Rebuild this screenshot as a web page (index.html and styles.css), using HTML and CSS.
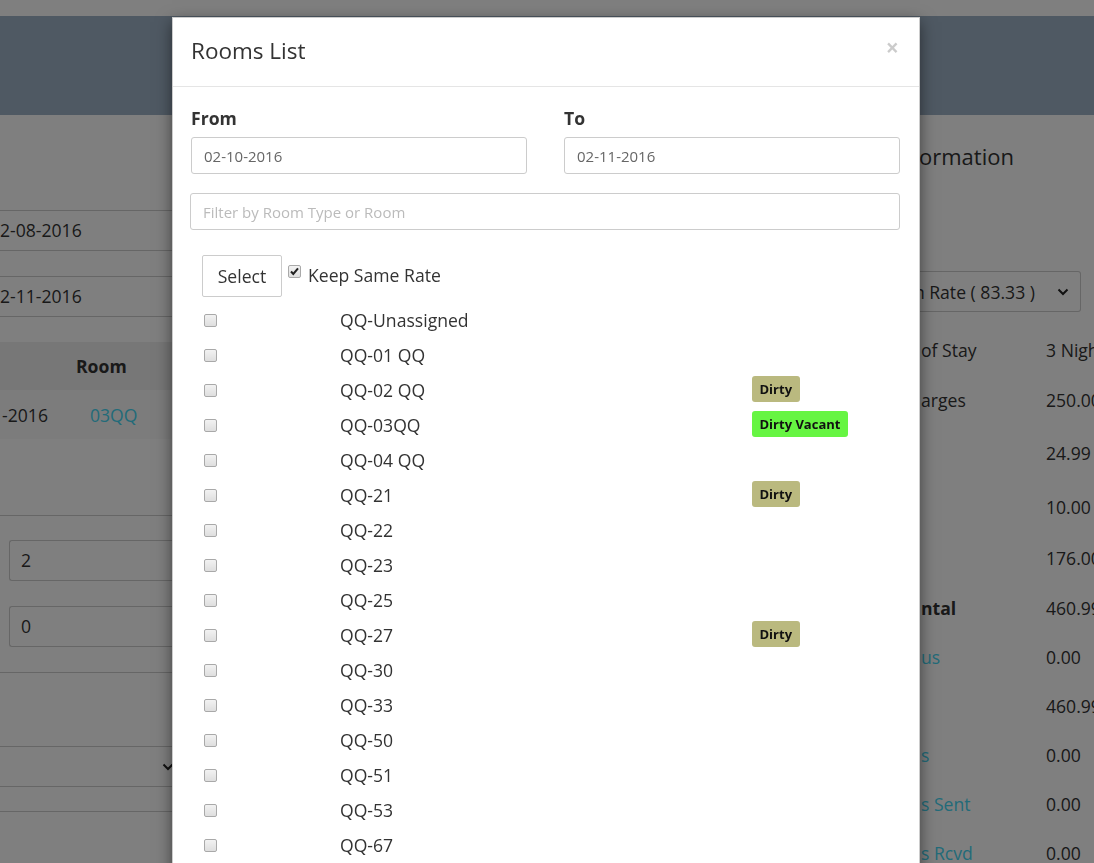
FILE: index.html
```html
<!DOCTYPE html>
<html lang="en">
<head>
<meta charset="utf-8">
<title>Rooms List</title>
<link rel="stylesheet" href="styles.css">
</head>
<body>
<div class="page">
  <div class="topstrip"></div>
  <div class="banner"></div>
  <div class="content">
    <div class="left-col">
      <div class="field field-first">2-08-2016</div>
      <div class="field field-next">2-11-2016</div>
      <div class="tbl-head"><span class="th-room">Room</span></div>
      <div class="tbl-row"><span class="td-date">1-2016</span><a class="link td-room">03QQ</a></div>
      <div class="divider divider-a"></div>
      <div class="num-input num-first">2</div>
      <div class="num-input num-next">0</div>
      <div class="divider divider-b"></div>
      <div class="select-left">
        <svg class="chev" width="12" height="8" viewBox="0 0 12 8"><polyline points="1.5,1.5 6,6 10.5,1.5" fill="none" stroke="#222" stroke-width="2"/></svg>
      </div>
      <div class="divider divider-c"></div>
    </div>
    <div class="mid-col"></div>
    <div class="right-col">
      <h3 class="info-title">ormation</h3>
      <div class="rate-select">
        <span class="rate-text">en Rate ( 83.33 )</span>
        <svg class="chev" width="12" height="8" viewBox="0 0 12 8"><polyline points="1.5,1.5 6,6 10.5,1.5" fill="none" stroke="#222" stroke-width="2"/></svg>
      </div>
      <div class="sum-row r1"><span class="sum-label">of Stay</span><span class="sum-val">3 Nights</span></div>
      <div class="sum-row r2"><span class="sum-label">arges</span><span class="sum-val">250.00</span></div>
      <div class="sum-row r3"><span class="sum-label"></span><span class="sum-val">24.99</span></div>
      <div class="sum-row r4"><span class="sum-label"></span><span class="sum-val">10.00</span></div>
      <div class="sum-row r5"><span class="sum-label"></span><span class="sum-val">176.00</span></div>
      <div class="sum-row"><span class="sum-label bold">ntal</span><span class="sum-val">460.99</span></div>
      <div class="sum-row"><a class="sum-label link">us</a><span class="sum-val">0.00</span></div>
      <div class="sum-row"><span class="sum-label"></span><span class="sum-val">460.99</span></div>
      <div class="sum-row"><a class="sum-label link">s</a><span class="sum-val">0.00</span></div>
      <div class="sum-row"><a class="sum-label link">s Sent</a><span class="sum-val">0.00</span></div>
      <div class="sum-row"><a class="sum-label link">s Rcvd</a><span class="sum-val">0.00</span></div>
    </div>
  </div>
</div>

<div class="backdrop"></div>

<div class="modal">
  <div class="modal-header">
    <h4 class="modal-title">Rooms List</h4>
    <button class="close" type="button">×</button>
  </div>
  <div class="modal-body">
    <div class="dates">
      <div class="date-group">
        <label class="lbl">From</label>
        <input class="form-input" type="text" value="02-10-2016" readonly>
      </div>
      <div class="date-group">
        <label class="lbl">To</label>
        <input class="form-input" type="text" value="02-11-2016" readonly>
      </div>
    </div>
    <input class="form-input filter" type="text" placeholder="Filter by Room Type or Room">
    <div class="select-row">
      <button class="btn" type="button">Select</button>
      <input class="cb cb-keep" type="checkbox" checked>
      <span class="keep-label">Keep Same Rate</span>
    </div>
    <div class="room-list">
      <div class="room"><input class="cb" type="checkbox"><span class="room-name">QQ-Unassigned</span><span></span></div>
      <div class="room"><input class="cb" type="checkbox"><span class="room-name">QQ-01 QQ</span><span></span></div>
      <div class="room"><input class="cb" type="checkbox"><span class="room-name">QQ-02 QQ</span><span class="badge badge-dirty">Dirty</span></div>
      <div class="room"><input class="cb" type="checkbox"><span class="room-name">QQ-03QQ</span><span class="badge badge-vacant">Dirty Vacant</span></div>
      <div class="room"><input class="cb" type="checkbox"><span class="room-name">QQ-04 QQ</span><span></span></div>
      <div class="room"><input class="cb" type="checkbox"><span class="room-name">QQ-21</span><span class="badge badge-dirty">Dirty</span></div>
      <div class="room"><input class="cb" type="checkbox"><span class="room-name">QQ-22</span><span></span></div>
      <div class="room"><input class="cb" type="checkbox"><span class="room-name">QQ-23</span><span></span></div>
      <div class="room"><input class="cb" type="checkbox"><span class="room-name">QQ-25</span><span></span></div>
      <div class="room"><input class="cb" type="checkbox"><span class="room-name">QQ-27</span><span class="badge badge-dirty">Dirty</span></div>
      <div class="room"><input class="cb" type="checkbox"><span class="room-name">QQ-30</span><span></span></div>
      <div class="room"><input class="cb" type="checkbox"><span class="room-name">QQ-33</span><span></span></div>
      <div class="room"><input class="cb" type="checkbox"><span class="room-name">QQ-50</span><span></span></div>
      <div class="room"><input class="cb" type="checkbox"><span class="room-name">QQ-51</span><span></span></div>
      <div class="room"><input class="cb" type="checkbox"><span class="room-name">QQ-53</span><span></span></div>
      <div class="room"><input class="cb" type="checkbox"><span class="room-name">QQ-67</span><span></span></div>
    </div>
  </div>
</div>
</body>
</html>
```

FILE: styles.css
```css
html, body {
  margin: 0;
  padding: 0;
  height: 100%;
  overflow: hidden;
}
body {
  font-family: "Open Sans", "Liberation Sans", sans-serif;
  font-size: 17.6px;
  color: #333;
  background: #fff;
}

/* ---------- underlying page ---------- */
.topstrip { height: 16px; background: #fff; }
.banner { height: 99px; background: #9fb3c6; }
.content {
  display: grid;
  grid-template-columns: 172px 748px 174px;
}
.left-col { overflow: hidden; padding-top: 95px; }
.field {
  height: 41px;
  box-sizing: border-box;
  border-top: 1px solid #ccc;
  border-bottom: 1px solid #ccc;
  line-height: 39px;
  white-space: nowrap;
}
.field-next { margin-top: 25px; }
.tbl-head {
  margin-top: 25px;
  height: 48px;
  background: #eee;
  display: flex;
  align-items: center;
}
.th-room { font-weight: 700; margin-left: 76px; }
.tbl-row {
  height: 49px;
  background: #f9f9f9;
  display: flex;
  align-items: center;
}
.td-date { text-indent: -8px; width: 90px; white-space: nowrap; }
.link { color: #45d6f2; text-decoration: none; }
.divider { border-top: 1px solid #ccc; }
.divider-a { margin-top: 76px; }
.num-input {
  margin-left: 9px;
  height: 41px;
  box-sizing: border-box;
  border: 1px solid #ccc;
  border-right: none;
  border-radius: 3px 0 0 3px;
  padding-left: 11px;
  line-height: 39px;
}
.num-first { margin-top: 24px; }
.num-next { margin-top: 25px; }
.divider-b { margin-top: 25px; }
.select-left {
  margin-top: 73px;
  height: 41px;
  box-sizing: border-box;
  border-top: 1px solid #ccc;
  border-bottom: 1px solid #ccc;
  display: flex;
  align-items: center;
  justify-content: flex-end;
  padding-right: 1px;
}
.select-left .chev { margin-right: -3px; }
.divider-c { margin-top: 24px; }

.right-col { padding-top: 29px; white-space: nowrap; overflow: hidden; }
.info-title {
  margin: 0;
  font-size: 22px;
  font-weight: 400;
  line-height: 24px;
  margin-left: -1px;
}
.rate-select {
  margin-top: 103px;
  width: 161px;
  height: 41px;
  box-sizing: border-box;
  border: 1px solid #ccc;
  border-left: none;
  border-radius: 0 3px 3px 0;
  display: flex;
  align-items: center;
}
.rate-text { margin-left: -16px; }
.rate-select .chev { margin-left: auto; margin-right: 11px; }
.sum-row {
  display: grid;
  grid-template-columns: 126px 1fr;
  height: 49px;
  align-items: center;
}
.sum-row.r1 { margin-top: 13px; }
.sum-row.r2 { height: 51px; }
.sum-row.r3 { height: 56px; }
.sum-row.r4 { height: 52px; }
.sum-row.r5 { height: 50px; }
.sum-label { margin-left: 1px; }
.sum-label.bold { font-weight: 700; }

/* ---------- overlay + modal ---------- */
.backdrop {
  position: fixed;
  inset: 0;
  background: rgba(0, 0, 0, 0.5);
}
.modal {
  position: absolute;
  left: 172px;
  top: 17px;
  width: 748px;
  box-sizing: border-box;
  background: #fff;
  border: 1px solid rgba(0, 0, 0, 0.2);
  border-bottom: none;
  box-shadow: 0 5px 15px rgba(0, 0, 0, 0.5);
  padding-bottom: 60px;
}
.modal-header {
  height: 69px;
  box-sizing: border-box;
  border-bottom: 1px solid #e5e5e5;
  display: flex;
  align-items: center;
  padding: 0 20px 2px 18px;
}
.modal-title {
  margin: 0;
  font-size: 22.5px;
  font-weight: 400;
  line-height: 26px;
  color: #333;
}
.close {
  margin-left: auto;
  margin-bottom: 8px;
  border: none;
  background: none;
  padding: 0;
  font-family: "Open Sans", "Liberation Sans", sans-serif;
  font-size: 23px;
  font-weight: 700;
  line-height: 1;
  color: #000;
  opacity: 0.2;
}
.modal-body {
  padding: 19px 19px 0 18px;
}
.dates {
  display: grid;
  grid-template-columns: 336px 336px;
  column-gap: 37px;
}
.lbl {
  display: block;
  font-weight: 700;
  font-size: 17.6px;
  line-height: 24px;
  margin-bottom: 7px;
  color: #333;
}
.form-input {
  display: block;
  width: 100%;
  height: 37px;
  box-sizing: border-box;
  border: 1px solid #ccc;
  border-radius: 3px;
  padding: 0 12px;
  font-family: "Open Sans", "Liberation Sans", sans-serif;
  font-size: 15px;
  color: #666;
  background: #fff;
  outline: none;
}
.form-input::placeholder { color: #bbb; }
.filter {
  margin-top: 19px;
  margin-left: -1px;
  width: calc(100% + 1px);
}
.select-row {
  margin-top: 25px;
  margin-left: 11px;
  display: flex;
  align-items: flex-start;
}
.btn {
  width: 80px;
  height: 42px;
  box-sizing: border-box;
  border: 1px solid #ccc;
  border-radius: 2px;
  background: #fff;
  font-family: "Open Sans", "Liberation Sans", sans-serif;
  font-size: 17.6px;
  color: #333;
  padding: 0;
}
.cb {
  appearance: none;
  -webkit-appearance: none;
  width: 13px;
  height: 13px;
  margin: 0;
  box-sizing: border-box;
  border: 1px solid #a9a9a9;
  border-radius: 2px;
  background: linear-gradient(#f2f2f2, #dedede);
  flex: none;
}
.cb:checked {
  background-image: url("data:image/svg+xml,%3Csvg xmlns='http://www.w3.org/2000/svg' viewBox='0 0 11 11'%3E%3Cpath d='M2 5.5 L4.3 8 L9 2.3' fill='none' stroke='%23222' stroke-width='2'/%3E%3C/svg%3E"), linear-gradient(#f2f2f2, #dedede);
  background-size: 11px 11px, 100% 100%;
  background-repeat: no-repeat;
}
.cb-keep { margin-left: 6px; margin-top: 10px; }
.keep-label {
  margin-left: 7px;
  line-height: 40px;
  font-size: 17.6px;
  color: #333;
}
.room-list { margin-top: 5px; }
.room {
  display: grid;
  grid-template-columns: 136px 412px auto;
  align-items: center;
  height: 35px;
  padding-left: 13px;
}
.room .cb { margin-top: 1px; }
.room-name { font-size: 17.6px; color: #333; }
.badge {
  justify-self: start;
  height: 26px;
  line-height: 26px;
  padding: 0 7.5px;
  margin-top: -1px;
  border-radius: 3px;
  font-size: 13px;
  font-weight: 700;
  color: #111;
}
.badge-dirty { background: #bab97f; }
.badge-vacant { background: #66f542; }
```
